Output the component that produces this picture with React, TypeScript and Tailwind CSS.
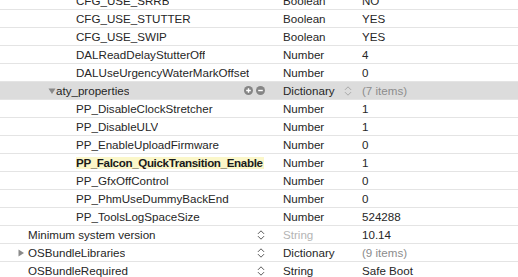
import React from 'react'

type Row = {
  name: string
  level: 0 | 1 | 2
  type: string
  value: string
  disclosure?: 'open' | 'closed'
  selected?: boolean
  match?: boolean
  stepper?: boolean
  typeMuted?: boolean
  valueMuted?: boolean
}

const rows: Row[] = [
  { name: 'CFG_USE_SRRB', level: 2, type: 'Boolean', value: 'NO' },
  { name: 'CFG_USE_STUTTER', level: 2, type: 'Boolean', value: 'YES' },
  { name: 'CFG_USE_SWIP', level: 2, type: 'Boolean', value: 'YES' },
  { name: 'DALReadDelayStutterOff', level: 2, type: 'Number', value: '4' },
  { name: 'DALUseUrgencyWaterMarkOffset', level: 2, type: 'Number', value: '0' },
  { name: 'aty_properties', level: 1, type: 'Dictionary', value: '(7 items)', disclosure: 'open', selected: true, valueMuted: true },
  { name: 'PP_DisableClockStretcher', level: 2, type: 'Number', value: '1' },
  { name: 'PP_DisableULV', level: 2, type: 'Number', value: '1' },
  { name: 'PP_EnableUploadFirmware', level: 2, type: 'Number', value: '0' },
  { name: 'PP_Falcon_QuickTransition_Enable', level: 2, type: 'Number', value: '1', match: true },
  { name: 'PP_GfxOffControl', level: 2, type: 'Number', value: '0' },
  { name: 'PP_PhmUseDummyBackEnd', level: 2, type: 'Number', value: '0' },
  { name: 'PP_ToolsLogSpaceSize', level: 2, type: 'Number', value: '524288' },
  { name: 'Minimum system version', level: 0, type: 'String', value: '10.14', stepper: true, typeMuted: true },
  { name: 'OSBundleLibraries', level: 0, type: 'Dictionary', value: '(9 items)', disclosure: 'closed', stepper: true, valueMuted: true },
  { name: 'OSBundleRequired', level: 0, type: 'String', value: 'Safe Boot', stepper: true },
]

function Stepper({ light }: { light?: boolean }) {
  return (
    <svg width="8" height="12" viewBox="0 0 8 12" className="shrink-0" aria-hidden>
      <path
        d="M1.2 4.6 L4 1.8 L6.8 4.6 M1.2 7.4 L4 10.2 L6.8 7.4"
        fill="none"
        stroke={light ? '#a8a8a8' : '#5a5a5a'}
        strokeWidth="1"
        strokeLinecap="round"
        strokeLinejoin="round"
      />
    </svg>
  )
}

function RoundButton({ plus }: { plus?: boolean }) {
  return (
    <svg width="9" height="9" viewBox="0 0 9 9" className="shrink-0" aria-hidden>
      <circle cx="4.5" cy="4.5" r="4.5" fill="#858585" />
      <path d={plus ? 'M2.2 4.5 H6.8 M4.5 2.2 V6.8' : 'M2.2 4.5 H6.8'} stroke="#fff" strokeWidth="1.4" />
    </svg>
  )
}

function Triangle({ open }: { open?: boolean }) {
  return (
    <svg width="8" height="8" viewBox="0 0 8 8" className="shrink-0" aria-hidden>
      <path d={open ? 'M0.5 1.5 H7.5 L4 7 Z' : 'M1.5 0.5 L7 4 L1.5 7.5 Z'} fill="#8a8a8a" />
    </svg>
  )
}

const indent = { 0: 'pl-[17px]', 1: 'pl-[48px]', 2: 'pl-[76px]' }

function PlistRow({ row }: { row: Row }) {
  return (
    <div
      className={`flex h-[18px] items-center border-b border-[#e4e4e4] text-[11.6px] text-[#262626] ${
        row.selected ? 'bg-[#dcdcdc]' : 'bg-white'
      }`}
    >
      <div className={`flex w-[283px] shrink-0 items-center pr-[18px] ${indent[row.level]}`}>
        {row.disclosure && (
          <span className={`flex items-center ${row.level === 0 ? 'w-[11px]' : 'w-[8px]'}`}>
            <Triangle open={row.disclosure === 'open'} />
          </span>
        )}
        {row.level === 0 && !row.disclosure && <span className="w-[11px]" />}
        {row.match ? (
          <span className="shrink-0 whitespace-nowrap bg-[#fbf7c9] pr-[1px] font-bold leading-[12px] tracking-[-0.35px] text-[#1a1a1a]">
            {row.name}
          </span>
        ) : (
          <span className="truncate">{row.name}</span>
        )}
        <span className="flex-1" />
        {row.selected && (
          <span className="flex items-center gap-[3px]">
            <RoundButton plus />
            <RoundButton />
          </span>
        )}
        {row.stepper && <Stepper />}
      </div>
      <div className="flex w-[79px] shrink-0 items-center">
        <span className={row.typeMuted ? 'text-[#b4b4b4]' : ''}>{row.type}</span>
        {row.selected && (
          <span className="ml-[9px]">
            <Stepper light />
          </span>
        )}
      </div>
      <div className={`flex-1 ${row.valueMuted ? 'text-[#8c8c8c]' : ''}`}>{row.value}</div>
    </div>
  )
}

export default function App() {
  return (
    <div className="h-[277px] w-[518px] overflow-hidden bg-white font-['Liberation_Sans',sans-serif]">
      <div className="-mt-[8px]">
        {rows.map((row) => (
          <PlistRow key={row.name} row={row} />
        ))}
      </div>
    </div>
  )
}
